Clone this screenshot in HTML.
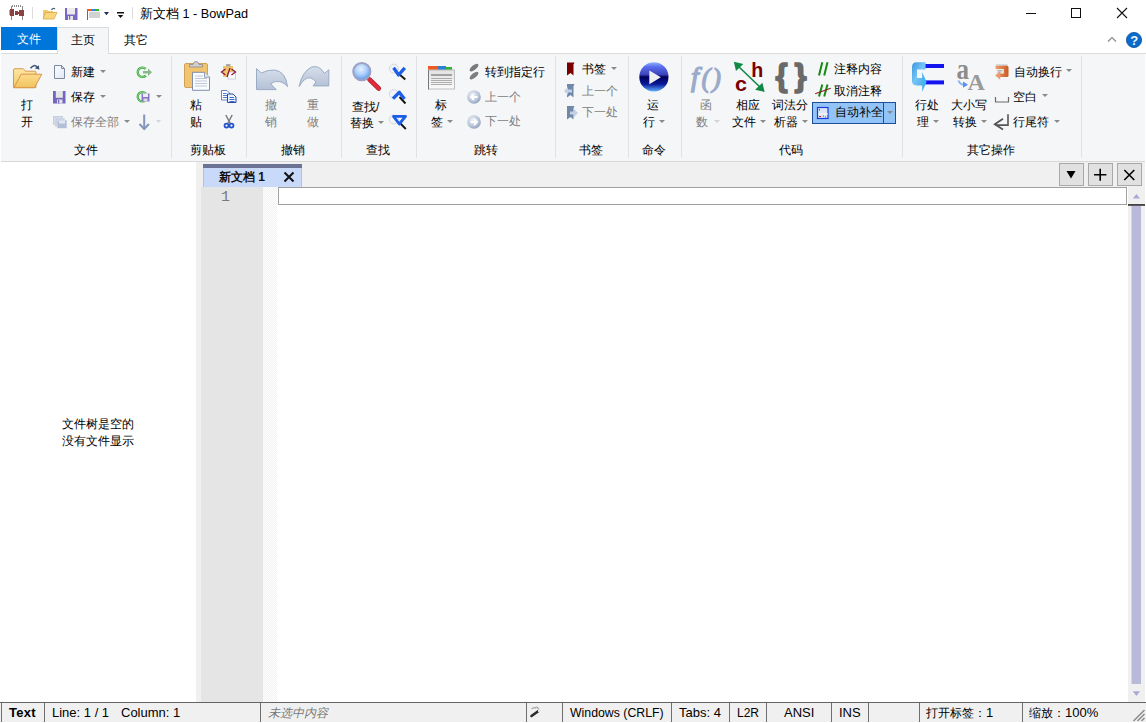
<!DOCTYPE html>
<html><head><meta charset="utf-8">
<style>
*{box-sizing:border-box}
html,body{margin:0;padding:0;width:1146px;height:723px;overflow:hidden;background:#fff;font-family:"Liberation Sans",sans-serif;color:#000}
.a{position:absolute}
.t{position:absolute;white-space:nowrap;font-size:12px;line-height:12px}
.g{color:#7d7d7d}
.arr{position:absolute;width:0;height:0;border-left:3px solid transparent;border-right:3px solid transparent;border-top:3px solid #8a8a8a}
.sep{position:absolute;top:56px;width:1px;height:102px;background:#e1e2e3}
.sd{position:absolute;top:703px;width:1px;height:19px;background:#6e6e6e}
.st{position:absolute;white-space:nowrap;font-size:13px;line-height:13px;top:706px;color:#000}
</style></head><body>
<!-- title bar -->
<div class="a" style="left:0;top:0;width:1146px;height:27px;background:#fff"></div>
<div class="t" style="left:140px;top:8px;font-size:12.7px;line-height:13px;color:#000">新文档 1 - BowPad</div>


<svg class="a" style="left:0;top:0" width="140" height="27">
 <g fill="#8a8a8a"><rect x="11" y="6" width="1" height="14"/><rect x="22" y="6" width="1" height="14"/>
 <rect x="12" y="5" width="1" height="2"/><rect x="14" y="5" width="1" height="2"/><rect x="16" y="5" width="1" height="2"/><rect x="18" y="5" width="1" height="2"/><rect x="20" y="5" width="1" height="2"/></g>
 <g fill="#8b4242"><rect x="10" y="9" width="4" height="7"/><rect x="9" y="10" width="1" height="5" fill="#c9a0a0"/><rect x="15" y="11" width="3" height="4"/><rect x="18" y="12" width="1" height="2"/><rect x="19" y="10" width="5" height="6"/></g>
 <rect x="32" y="7" width="1" height="12" fill="#dcdcdc"/>
 <path d="M43 10 h4 l1 1 h5 v2 h-10z" fill="#f2cf7a"/>
 <path d="M43 10 h4 l1 1 h5 v8 h-10z" fill="#f0c96a"/>
 <path d="M45.5 12.5 h11.5 l-3 6.5 h-11z" fill="#f8d77f" stroke="#d9a94a" stroke-width="0.8"/>
 <path d="M51.5 10 q1.5 -2.5 3.5 -1" fill="none" stroke="#4a5a78" stroke-width="1.3"/>
 <rect x="65" y="8" width="12.5" height="12" fill="#7b68c6"/>
 <rect x="67" y="8" width="8" height="6.5" fill="#ececec"/>
 <rect x="68" y="16" width="5" height="4" fill="#e6e6e6"/><rect x="69" y="16" width="1.2" height="3.5" fill="#7b68c6"/>
 <rect x="87" y="9" width="5" height="2" fill="#f05a22"/><rect x="92" y="9" width="4" height="2" fill="#2f86d6"/><rect x="96" y="9" width="3" height="2" fill="#2eb82e"/>
 <rect x="87" y="11" width="1" height="9" fill="#6a6a6a"/>
 <rect x="89" y="11" width="11" height="7" fill="#d2d2d2"/><rect x="89" y="11" width="11" height="1" fill="#eeeeee"/>
 <path d="M104 12 h5 l-2.5 3.3z" fill="#1b2c55"/>
 <rect x="117" y="12" width="7" height="1.5" fill="#111"/>
 <path d="M117.8 15 h5.5 l-2.75 3z" fill="#111"/>
 <rect x="132" y="7" width="1" height="12" fill="#dcdcdc"/>
</svg>
<svg class="a" style="left:1016px;top:0" width="130" height="27">
 <rect x="10" y="13" width="10" height="1" fill="#111"/>
 <rect x="55.5" y="8.5" width="9" height="9" fill="none" stroke="#111" stroke-width="1"/>
 <path d="M101 8 l10 10 M111 8 l-10 10" stroke="#111" stroke-width="1.1"/>
</svg>
<svg class="a" style="left:1100px;top:28px" width="46" height="24">
 <path d="M8 13.5 l4 -4 l4 4" fill="none" stroke="#8c8c8c" stroke-width="1.2"/>
 <circle cx="34" cy="12" r="7.6" fill="#0b6bcb" stroke="#0a4f9e" stroke-width="0.8"/>
 <text x="34.2" y="16.8" font-family="Liberation Sans" font-weight="bold" font-size="13" fill="#f2f6ff" text-anchor="middle">?</text>
</svg>

<!-- ribbon tabs -->
<div class="a" style="left:1px;top:27px;width:56px;height:23px;background:#0075da"></div>
<div class="t" style="left:17px;top:33px;color:#fff">文件</div>
<div class="a" style="left:57px;top:27px;width:52px;height:27px;background:#f5f6f8;border:1px solid #dadbdc;border-bottom:none"></div>
<div class="t" style="left:71px;top:34px">主页</div>
<div class="t" style="left:124px;top:34px">其它</div>

<!-- ribbon body -->
<div class="a" style="left:1px;top:53px;width:1145px;height:109px;background:#f5f6f8;border-top:1px solid #dadbdc;border-bottom:1px solid #d6d7d8"></div>
<div class="a" style="left:58px;top:53px;width:50px;height:1px;background:#f5f6f8"></div>

<!-- ribbon content -->
<div class="sep" style="left:171px"></div>
<div class="sep" style="left:246px"></div>
<div class="sep" style="left:341px"></div>
<div class="sep" style="left:416px"></div>
<div class="sep" style="left:555px"></div>
<div class="sep" style="left:628px"></div>
<div class="sep" style="left:681px"></div>
<div class="sep" style="left:902px"></div>
<div class="sep" style="left:1081px"></div>
<div class="a" style="left:812px;top:102px;width:84px;height:22px;background:#93c4f7;border:1px solid #1d4f98"></div>
<div class="a" style="left:883px;top:103px;width:1px;height:20px;background:#1d4f98"></div>
<div class="t" style="left:21px;top:99px">打</div>
<div class="t" style="left:21px;top:116px">开</div>
<div class="t" style="left:71px;top:66px">新建</div>
<div class="t" style="left:71px;top:91px">保存</div>
<div class="t g" style="left:71px;top:116px">保存全部</div>
<div class="t" style="left:74px;top:144px">文件</div>
<div class="t" style="left:190px;top:99px">粘</div>
<div class="t" style="left:190px;top:116px">贴</div>
<div class="t" style="left:190px;top:144px">剪贴板</div>
<div class="t g" style="left:265px;top:99px">撤</div>
<div class="t g" style="left:265px;top:116px">销</div>
<div class="t g" style="left:307px;top:99px">重</div>
<div class="t g" style="left:307px;top:116px">做</div>
<div class="t" style="left:281px;top:144px">撤销</div>
<div class="t" style="left:352px;top:101px">查找/</div>
<div class="t" style="left:350px;top:117px">替换</div>
<div class="t" style="left:366px;top:144px">查找</div>
<div class="t" style="left:435px;top:99px">标</div>
<div class="t" style="left:431px;top:116px">签</div>
<div class="t" style="left:485px;top:66px">转到指定行</div>
<div class="t g" style="left:485px;top:91px">上一个</div>
<div class="t g" style="left:485px;top:115px">下一处</div>
<div class="t" style="left:474px;top:144px">跳转</div>
<div class="t" style="left:582px;top:63px">书签</div>
<div class="t g" style="left:582px;top:85px">上一个</div>
<div class="t g" style="left:582px;top:106px">下一处</div>
<div class="t" style="left:579px;top:144px">书签</div>
<div class="t" style="left:647px;top:99px">运</div>
<div class="t" style="left:643px;top:116px">行</div>
<div class="t" style="left:642px;top:144px">命令</div>
<div class="t g" style="left:700px;top:99px">函</div>
<div class="t g" style="left:696px;top:116px">数</div>
<div class="t" style="left:736px;top:99px">相应</div>
<div class="t" style="left:732px;top:116px">文件</div>
<div class="t" style="left:772px;top:99px">词法分</div>
<div class="t" style="left:774px;top:116px">析器</div>
<div class="t" style="left:834px;top:63px">注释内容</div>
<div class="t" style="left:834px;top:85px">取消注释</div>
<div class="t" style="left:835px;top:106px">自动补全</div>
<div class="t" style="left:779px;top:144px">代码</div>
<div class="t" style="left:915px;top:99px">行处</div>
<div class="t" style="left:917px;top:116px">理</div>
<div class="t" style="left:951px;top:99px">大小写</div>
<div class="t" style="left:953px;top:116px">转换</div>
<div class="t" style="left:1014px;top:66px">自动换行</div>
<div class="t" style="left:1013px;top:91px">空白</div>
<div class="t" style="left:1013px;top:116px">行尾符</div>
<div class="t" style="left:967px;top:144px">其它操作</div>
<div class="arr" style="left:100px;top:70px"></div>
<div class="arr" style="left:100px;top:95px"></div>
<div class="arr" style="left:124px;top:120px"></div>
<div class="arr" style="left:156px;top:95px"></div>
<div class="arr" style="left:378px;top:121px"></div>
<div class="arr" style="left:447px;top:120px"></div>
<div class="arr" style="left:611px;top:67px"></div>
<div class="arr" style="left:659px;top:120px"></div>
<div class="arr" style="left:714px;top:120px;border-top-color:#d2d4d8"></div>
<div class="arr" style="left:760px;top:120px"></div>
<div class="arr" style="left:802px;top:120px"></div>
<div class="arr" style="left:887px;top:111px"></div>
<div class="arr" style="left:933px;top:120px"></div>
<div class="arr" style="left:981px;top:120px"></div>
<div class="arr" style="left:1066px;top:69px"></div>
<div class="arr" style="left:1042px;top:94px"></div>
<div class="arr" style="left:1054px;top:120px"></div>
<!-- ICONS -->
<svg class="a" style="left:0;top:0" width="1146" height="162">
<defs>
 <linearGradient id="gFold" x1="0" y1="0" x2="0" y2="1"><stop offset="0" stop-color="#fde6a4"/><stop offset="1" stop-color="#f3c666"/></linearGradient>
 <linearGradient id="gFront" x1="0" y1="0" x2="0" y2="1"><stop offset="0" stop-color="#fbdc8c"/><stop offset="1" stop-color="#f1c35e"/></linearGradient>
 <linearGradient id="gDoc" x1="0" y1="0" x2="1" y2="1"><stop offset="0" stop-color="#ffffff"/><stop offset="1" stop-color="#dfe6f4"/></linearGradient>
 <linearGradient id="gUndo" x1="0" y1="0" x2="0" y2="1"><stop offset="0" stop-color="#d6deea"/><stop offset="1" stop-color="#b4c1d6"/></linearGradient>
 <radialGradient id="gLens" cx="0.45" cy="0.35" r="0.7"><stop offset="0" stop-color="#e8f2ff"/><stop offset="0.5" stop-color="#a9cdfb"/><stop offset="1" stop-color="#4d8fe8"/></radialGradient>
 <radialGradient id="gCirc" cx="0.4" cy="0.35" r="0.75"><stop offset="0" stop-color="#eef2f8"/><stop offset="0.6" stop-color="#b8c4d8"/><stop offset="1" stop-color="#8494b4"/></radialGradient>
 <linearGradient id="gPlay" x1="0" y1="0" x2="0" y2="1"><stop offset="0" stop-color="#8fb4ff"/><stop offset="0.15" stop-color="#5a6ef0"/><stop offset="0.42" stop-color="#3a44b8"/><stop offset="0.5" stop-color="#00005a"/><stop offset="0.75" stop-color="#0a1a9a"/><stop offset="1" stop-color="#60b0ff"/></linearGradient>
 <linearGradient id="gTab" x1="0" y1="0" x2="0" y2="1"><stop offset="0" stop-color="#e2e2e2"/><stop offset="1" stop-color="#fafafa"/></linearGradient>
 <linearGradient id="gWrap" x1="0" y1="0" x2="1" y2="0"><stop offset="0" stop-color="#f0a070"/><stop offset="1" stop-color="#c85a20"/></linearGradient>
 <linearGradient id="gLP" x1="0" y1="0" x2="1" y2="1"><stop offset="0" stop-color="#3f92dc"/><stop offset="0.5" stop-color="#74c6f6"/><stop offset="1" stop-color="#4aa2e2"/></linearGradient>
</defs>

<!-- open big folder -->
<path d="M13.5 70 q0 -1.3 1.3 -1.3 h8.4 l2.3 2.5 h9.6 q0.8 0 0.8 0.8 v15.6 h-22.4z" fill="url(#gFold)" stroke="#d59a55" stroke-width="1"/>
<path d="M21.2 74.2 h20.6 l-7.4 13.5 h-20.4z" fill="url(#gFront)" stroke="#d8974c" stroke-width="1" stroke-linejoin="round"/>
<path d="M30.5 68.3 q3.5 -4.8 6.8 -1" fill="none" stroke="#3f5678" stroke-width="1.5"/>
<path d="M34.8 68.2 l4.6 1.6 l-0.6 -4.6z" fill="#3f5678"/>

<!-- new doc small -->
<path d="M54.5 65.5 h7 l3 3 v10 h-10z" fill="url(#gDoc)" stroke="#7c8aa2" stroke-width="1"/>
<path d="M61.5 65.5 v3 h3" fill="none" stroke="#7c8aa2" stroke-width="1"/>
<!-- save small -->
<rect x="53" y="91" width="12.5" height="12.5" fill="#7466bf"/>
<rect x="55.8" y="91" width="7" height="6.8" fill="#e6e6e6"/>
<rect x="57" y="99.5" width="5.5" height="4" fill="#e2e2e2"/><rect x="58" y="100" width="1.2" height="3.5" fill="#7466bf"/>
<!-- save all -->
<g opacity="0.75"><rect x="53" y="116" width="10" height="9" fill="#b6c2d8"/><rect x="55" y="118" width="10" height="9" fill="#a8b6d0" stroke="#f5f6f8" stroke-width="0.6"/><rect x="57" y="120" width="10" height="8.5" fill="#9daccc" stroke="#f5f6f8" stroke-width="0.6"/><rect x="59" y="120.5" width="6" height="3" fill="#dde3ee"/></g>

<!-- refresh icons -->
<path d="M145.6 68.8 a4.7 4.7 0 1 0 0.3 6.6" fill="none" stroke="#3aa83a" stroke-width="2.3"/><path d="M145.6 68.8 a4.7 4.7 0 1 0 0.3 6.6" fill="none" stroke="#a0e4a0" stroke-width="0.8"/>
<path d="M143 71 h5 v-2.5 l4 3.8 l-4 3.8 v-2.5 h-5z" fill="#8ab88a"/>
<path d="M145.6 93.3 a4.7 4.7 0 1 0 0.3 6.6" fill="none" stroke="#3aa83a" stroke-width="2.3"/><path d="M145.6 93.3 a4.7 4.7 0 1 0 0.3 6.6" fill="none" stroke="#a0e4a0" stroke-width="0.8"/>
<rect x="141.5" y="93.5" width="8" height="8" fill="#8576cc"/><rect x="143" y="93.5" width="5" height="3.5" fill="#eeeeee"/><rect x="143.5" y="98.5" width="4" height="3" fill="#dcdcdc"/>
<path d="M144.2 114.5 v14" stroke="#8496bc" stroke-width="2"/>
<path d="M139.5 124 l4.7 5 l4.7 -5" fill="none" stroke="#8496bc" stroke-width="2"/>
<path d="M156 120 h5 l-2.5 3z" fill="#d4d6da"/>

<!-- paste big -->
<rect x="184.5" y="63.5" width="23" height="24" rx="1.5" fill="#f2c46e" stroke="#cfa25a" stroke-width="1"/>
<path d="M189.5 67 h13 v-2.5 h-3.5 q-0.5 -3 -3 -3 q-2.5 0 -3 3 h-3.5z" fill="#d0d0d0" stroke="#8a8a8a" stroke-width="0.8"/>
<path d="M192.5 72.3 h12 l5 5 v13 h-17z" fill="#fbfcfe" stroke="#7f8ea8" stroke-width="1"/>
<path d="M204.5 72.3 v5 h5" fill="#dfe5ef" stroke="#7f8ea8" stroke-width="0.8"/>
<g stroke="#b8c2d2" stroke-width="0.9"><path d="M195 76 h8 M195 78.5 h12 M195 81 h12 M195 83.5 h12 M195 86 h12"/></g>
<!-- paste html -->
<rect x="223" y="66" width="10" height="11" fill="#f1c46a"/><rect x="226" y="64" width="4.5" height="2.5" fill="#aaa"/>
<rect x="228" y="72" width="7.5" height="7" fill="#fff" stroke="#aab4c8" stroke-width="0.6"/>
<path d="M225.5 69 l-4 3 l4 3 M231.5 69 l4 3 l-4 3 M230 68 l-3 9" fill="none" stroke="#8a1a3a" stroke-width="1.3"/>
<!-- copy -->
<path d="M221.5 90.5 h5.5 l2.5 2.5 v7 h-8z" fill="#fafcff" stroke="#6684bc" stroke-width="1"/>
<g stroke="#4f7fd0" stroke-width="1"><path d="M223 93.5 h3.5 M223 95.5 h4.5 M223 97.5 h4.5"/></g>
<path d="M227.5 94 h5.5 l3 3 v5.5 h-8.5z" fill="#eef4fd" stroke="#2a48a0" stroke-width="1"/>
<g stroke="#3f6fcc" stroke-width="1"><path d="M229.5 97.5 h4.5 M229.5 99.5 h5 M229.5 101.5 h5"/></g>
<!-- cut -->
<path d="M225.8 115 l4.5 8.5 M232.2 115 l-4.5 8.5" stroke="#7a7a7a" stroke-width="1.5"/>
<circle cx="226.5" cy="125.6" r="2" fill="none" stroke="#2452c8" stroke-width="1.7"/>
<circle cx="231.5" cy="125.6" r="2" fill="none" stroke="#2452c8" stroke-width="1.7"/>

<!-- undo -->
<path d="M256.5 68.6 l4.8 4.4 q7 -3.5 13.5 -2.9 q11 1.5 12.7 16.5 q-5 -6 -12 -5 q-2 0.4 -4.8 2.4 l5.6 5.6 h-19.8z" fill="url(#gUndo)" stroke="#9aabc6" stroke-width="1"/>
<!-- redo -->
<path d="M299.1 86.6 q3 -15 12.4 -19.5 q8 -2.5 12.8 6.4 l4.5 -3.7 v16.1 h-15.8 l3 -4 q-2.5 -3 -5.5 -4 q-6 -1 -11.4 8.7z" fill="url(#gUndo)" stroke="#9aabc6" stroke-width="1"/>

<!-- magnifier -->
<path d="M369.5 79.5 l9.3 9" stroke="#9a2a32" stroke-width="4.6" stroke-linecap="round"/>
<path d="M369.5 79.5 l9.3 9" stroke="#e8283a" stroke-width="3.2" stroke-linecap="round"/>
<circle cx="361.8" cy="71.6" r="8.6" fill="url(#gLens)" stroke="#9da2c4" stroke-width="2"/>
<!-- find next / prev / replace -->
<g>
 <circle cx="393.8" cy="68.6" r="4.4" fill="#f2f4f8" stroke="#a8acb4" stroke-width="0.7" stroke-dasharray="1.2 0.8"/>
 <path d="M399 74 l6.3 5.5" stroke="#151515" stroke-width="1.9"/>
 <path d="M393.6 67.8 L398.6 75 L404.8 67.8" fill="none" stroke="#1d5ee6" stroke-width="3.3" stroke-linejoin="round"/>
 <circle cx="393.8" cy="94" r="4.4" fill="#f2f4f8" stroke="#a8acb4" stroke-width="0.7" stroke-dasharray="1.2 0.8"/>
 <path d="M399.5 97 l6 6.5" stroke="#151515" stroke-width="1.9"/>
 <path d="M393 98.6 L399.2 92.3 L404.5 99" fill="none" stroke="#1d5ee6" stroke-width="3.3" stroke-linejoin="round"/>
 <circle cx="393.8" cy="119.5" r="4.4" fill="#f2f4f8" stroke="#a8acb4" stroke-width="0.7" stroke-dasharray="1.2 0.8"/>
 <path d="M400 123 l5.8 6" stroke="#151515" stroke-width="1.9"/>
 <path d="M393.5 116.3 H405.5 L399.3 124 Z" fill="none" stroke="#1d5ee6" stroke-width="2.8" stroke-linejoin="round"/>
</g>

<!-- tab icon -->
<rect x="428" y="66" width="10" height="4" fill="#ef5a24"/><rect x="438" y="66" width="8" height="4" fill="#2f7ed0"/><rect x="446" y="67" width="6" height="3" fill="#2db52d"/>
<rect x="428.5" y="70" width="26" height="19" fill="url(#gTab)" stroke="#bdbdbd" stroke-width="1"/>
<rect x="428" y="70" width="1" height="19.5" fill="#777"/>
<g stroke="#9a9a9a"><path d="M431 75 h21" stroke-width="1.8"/><path d="M431 78.5 h21 M431 80.5 h21 M431 82.5 h21 M431 84.5 h21" stroke-width="0.8"/></g>
<!-- goto footprints -->
<ellipse cx="474" cy="67.6" rx="2.3" ry="5.4" transform="rotate(50 474 67.6)" fill="#7a7a7a"/>
<ellipse cx="474" cy="75.6" rx="2.3" ry="5.4" transform="rotate(50 474 75.6)" fill="#7e7e7e"/>
<!-- prev/next circles -->
<circle cx="474" cy="97" r="6.8" fill="url(#gCirc)"/>
<path d="M477.5 97 h-6 M474 94 l-3 3 l3 3" fill="none" stroke="#fff" stroke-width="1.8"/>
<circle cx="474" cy="122" r="6.8" fill="url(#gCirc)"/>
<path d="M470.5 122 h6 M474 119 l3 3 l-3 3" fill="none" stroke="#fff" stroke-width="1.8"/>

<!-- bookmarks -->
<path d="M567 62.5 h7.5 l-1 2 v11 l-3 -2.5 l-3.5 2.5z" fill="#7a0000"/>
<path d="M567 84 h7.5 l-1 2 v11.5 l-3 -2.5 l-3.5 2.5z" fill="#7088aa"/>
<path d="M564 91 l4 -4 v2.5 h4 v3 h-4 v2.5z" fill="#c4d0e4"/>
<path d="M567 106 h7.5 l-1 2 v11.5 l-3 -2.5 l-3.5 2.5z" fill="#7088aa"/>
<path d="M578 113 l-4 -4 v2.5 h-4 v3 h4 v2.5z" fill="#c4d0e4"/>

<!-- play -->
<circle cx="653.9" cy="76.9" r="14.6" fill="url(#gPlay)"/>
<path d="M649.3 70.6 v13.7 l11.5 -7.1z" fill="#f0f0f0"/>

<!-- f() -->
<text x="691" y="86" font-family="Liberation Serif" font-style="italic" font-size="28" fill="#9aaac8" stroke="#9aaac8" stroke-width="1.3">f</text>
<text x="701.5" y="87" font-family="Liberation Serif" font-style="italic" font-size="27" fill="#9aaac8" stroke="#9aaac8" stroke-width="1.1">(</text>
<text x="712" y="87" font-family="Liberation Serif" font-style="italic" font-size="27" fill="#9aaac8" stroke="#9aaac8" stroke-width="1.1">)</text>
<!-- c/h -->
<path d="M737 65 l25 24" stroke="#118844" stroke-width="1.6"/>
<path d="M733.8 61.8 l9.5 2.2 l-7.3 7z" fill="#118844"/>
<path d="M764.6 92 l-9.5 -2.2 l7.3 -7z" fill="#118844"/>
<text x="751.3" y="76.8" font-family="Liberation Sans" font-weight="bold" font-size="19.5" fill="#7a0000" textLength="12" lengthAdjust="spacingAndGlyphs">h</text>
<text x="735" y="90.6" font-family="Liberation Sans" font-weight="bold" font-size="20" fill="#7a0000" textLength="12" lengthAdjust="spacingAndGlyphs">c</text>
<!-- braces -->
<text x="775.5" y="85.5" font-family="Liberation Sans" font-weight="bold" font-size="31" fill="#6a6a6a" stroke="#6a6a6a" stroke-width="1.6">{</text><text x="794.5" y="85.5" font-family="Liberation Sans" font-weight="bold" font-size="31" fill="#6a6a6a" stroke="#6a6a6a" stroke-width="1.6">}</text>
<!-- comment -->
<path d="M822.3 62.2 l-3.3 13.2 M827.5 62.2 l-3.3 13.2" stroke="#158a15" stroke-width="2"/>
<path d="M822.3 84.4 l-3.3 12.2 M827.5 84.4 l-3.3 12.2" stroke="#158a15" stroke-width="2"/>
<path d="M815.2 93.8 l15.5 -5.6" stroke="#8a2020" stroke-width="1.1"/>
<!-- autocomplete icon -->
<rect x="817.5" y="107.5" width="10.5" height="11" fill="#dce6f6" stroke="#1a3ae0" stroke-width="1.2"/>
<rect x="818.5" y="113" width="9" height="2" fill="#f2f2f2"/>
<g fill="#e02020"><rect x="819" y="109" width="1" height="1.5"/><rect x="819" y="116" width="2" height="1"/><rect x="823" y="115.5" width="1" height="1"/><rect x="825" y="116.5" width="1" height="1"/></g>

<!-- line processing -->
<rect x="925" y="64" width="19" height="4" fill="#1414f0"/>
<rect x="925" y="80.4" width="19" height="4" fill="#1414f0"/>
<path d="M925.6 62.2 H916.5 Q912 62.2 912 67 V80.8 Q912 85.4 916.5 85.4 H922.8 V78 H917 V69.6 H925.6 Z" fill="url(#gLP)"/>
<path d="M922.2 72.2 l4.4 9.8 l-4.4 9.7z" fill="#42b4f2"/>
<!-- case aA -->
<text x="956.5" y="79" font-family="Liberation Serif" font-weight="bold" font-size="30" fill="#8c8c8c" textLength="12.5" lengthAdjust="spacingAndGlyphs">a</text>
<text x="967.5" y="89.5" font-family="Liberation Serif" font-weight="bold" font-size="24" fill="#9a9a9a" textLength="17.5" lengthAdjust="spacingAndGlyphs">A</text>
<path d="M958.5 80.5 q1.5 4 5 4.3" fill="none" stroke="#8ab4f4" stroke-width="2"/><path d="M963 81.5 l5 3.3 l-5 3z" fill="#5a8ef0"/>
<!-- autowrap -->
<rect x="996" y="64.3" width="11.5" height="1.6" fill="#cfcfcf"/>
<rect x="996.3" y="69.1" width="7.5" height="4.3" fill="#ececec"/>
<path d="M997.5 70.5 h5 M997.5 72 h4" stroke="#a8a8a8" stroke-width="0.8"/>
<path d="M995.5 65.8 H1007 Q1008.5 65.8 1008.5 67.5 V75.5 Q1008.5 77 1007 77 H999.5 V73.4 H1003.8 V69.1 H995.5 Z" fill="url(#gWrap)"/>
<path d="M995.2 75.4 L1000.2 71 V79.8 Z" fill="#ec9a70"/>
<!-- whitespace -->
<path d="M995.5 97 v5 h13 v-5" fill="none" stroke="#6a6a6a" stroke-width="1.2"/>
<!-- EOL -->
<path d="M1008 114.3 v10.8 h-12.5" fill="none" stroke="#555" stroke-width="1.6"/>
<path d="M1003 118.8 l-8.2 5.5 l8.2 5.3" fill="none" stroke="#555" stroke-width="1.8"/>
</svg>

<!-- /ICONS -->
<!-- below -->
<div class="a" style="left:0;top:162px;width:196px;height:540px;background:#fff"></div>
<div class="t" style="left:62px;top:418px">文件树是空的</div>
<div class="t" style="left:62px;top:435px">没有文件显示</div>
<div class="a" style="left:196px;top:162px;width:950px;height:25px;background:#f0f0f0"></div>
<div class="a" style="left:196px;top:187px;width:5px;height:515px;background:#f0f0f0"></div>
<div class="a" style="left:201px;top:187px;width:62px;height:515px;background:#e5e5e5"></div>
<div class="a" style="left:263px;top:187px;width:14px;height:515px;background-color:#fff;background-image:repeating-conic-gradient(#f1f1f1 0 25%,#ffffff 0 50%);background-size:2px 2px"></div>
<div class="a" style="left:277px;top:187px;width:851px;height:515px;background:#fff"></div>
<div class="a" style="left:278px;top:187px;width:849px;height:18px;border:1px solid #a0a0a0;border-top-color:#a0a0a0"></div>
<div class="a" style="left:1128px;top:187px;width:18px;height:515px;background:#f0f0f0"></div>


<div class="a" style="left:203px;top:164px;width:99px;height:4px;background:#6b7394"></div>
<div class="a" style="left:203px;top:168px;width:99px;height:19px;background:#c9d9f9;border-left:1px solid #a9c1f5;border-right:1px solid #a9c1f5"></div>
<div class="t" style="left:219px;top:171px;font-weight:bold;font-size:12px;line-height:12px;color:#111">新文档 1</div>
<svg class="a" style="left:280px;top:168px" width="20" height="18"><path d="M4.5 4.5 l9 9 M13.5 4.5 l-9 9" stroke="#111" stroke-width="2"/></svg>
<div class="a" style="left:1059px;top:163px;width:25px;height:23px;background:#e1e1e1;border:1px solid #a9a9a9"></div>
<div class="a" style="left:1088px;top:163px;width:25px;height:23px;background:#e1e1e1;border:1px solid #a9a9a9"></div>
<div class="a" style="left:1117px;top:163px;width:25px;height:23px;background:#e1e1e1;border:1px solid #a9a9a9"></div>
<svg class="a" style="left:1059px;top:163px" width="84" height="23">
 <path d="M7.5 8 h9 l-4.5 7.5z" fill="#000"/>
 <path d="M41.2 17.7 v-12 M35 11.7 h12.4" stroke="#000" stroke-width="1.6"/>
 <path d="M65.3 7 l10 10 M75.3 7 l-10 10" stroke="#000" stroke-width="1.6"/>
</svg>
<div class="t" style="left:221px;top:190px;font-family:'Liberation Mono',monospace;font-size:15px;line-height:15px;color:#7a7a7a">1</div>
<svg class="a" style="left:1128px;top:187px" width="18" height="515">
 <path d="M4.8 11.6 h7.2 l-3.6 -4.6z" fill="#a9a9d6"/>
 <rect x="0" y="17.2" width="17" height="1.5" fill="#1a1a1a"/>
 <rect x="3.5" y="19" width="9.5" height="478" fill="#b9b9da"/>
 <path d="M4.8 504.3 h7.2 l-3.6 4.6z" fill="#a9a9d6"/>
</svg>

<div class="a" style="left:1145px;top:54px;width:1px;height:648px;background:#fff"></div>
<!-- status bar -->
<div class="a" style="left:0;top:702px;width:1146px;height:21px;background:#f0f0f0;border-top:1px solid #646464"></div>

<div class="a" style="left:1px;top:702px;width:1px;height:20px;background:#6e6e6e"></div>
<div class="sd" style="left:44px"></div>
<div class="sd" style="left:260px"></div>
<div class="sd" style="left:526px"></div>
<div class="sd" style="left:562px"></div>
<div class="sd" style="left:671px"></div>
<div class="sd" style="left:729px"></div>
<div class="sd" style="left:766px"></div>
<div class="sd" style="left:831px"></div>
<div class="sd" style="left:868px"></div>
<div class="sd" style="left:919px"></div>
<div class="sd" style="left:1022px"></div>
<svg class="a" style="left:526px;top:702px" width="20" height="20">
 <path d="M5.5 14 l7 -5" stroke="#2a2a2a" stroke-width="2.6" stroke-linecap="round"/>
 <path d="M5.5 7 q2 -2 3.5 -1 q1.5 -1.5 3 0 l1 1.5" fill="none" stroke="#b0b0b0" stroke-width="1.4"/>
 <rect x="12" y="7.5" width="2.5" height="2.5" fill="#dfe8f0"/>
</svg>
<div class="a" style="left:0;top:722px;width:1146px;height:1px;background:#fff"></div>
<div class="st" style="left:9px;font-weight:bold;letter-spacing:0.3px">Text</div>
<div class="st" style="left:52px">Line: 1 / 1</div>
<div class="st" style="left:121px">Column: 1</div>
<div class="st" style="left:268px;top:707px;font-size:12px;line-height:12px;font-style:italic;color:#777">未选中内容</div>
<div class="st" style="left:570px;top:707px;font-size:12.3px">Windows (CRLF)</div>
<div class="st" style="left:679px">Tabs: 4</div>
<div class="st" style="left:737px;font-size:12px;top:707px">L2R</div>
<div class="st" style="left:784px">ANSI</div>
<div class="st" style="left:839px">INS</div>
<div class="st" style="left:926px;top:706px;font-size:12px">打开标签：<span style="font-size:13px">1</span></div>
<div class="st" style="left:1029px;top:706px;font-size:12px">缩放：<span style="font-size:13px">100%</span></div>
<svg class="a" style="left:1126px;top:702px" width="20" height="21">
 <path d="M18.5 8 l-11 11 M18.5 12 l-7 7 M18.5 16 l-3 3" stroke="#8c8c8c" stroke-width="1.5"/>
</svg>

</body></html>
